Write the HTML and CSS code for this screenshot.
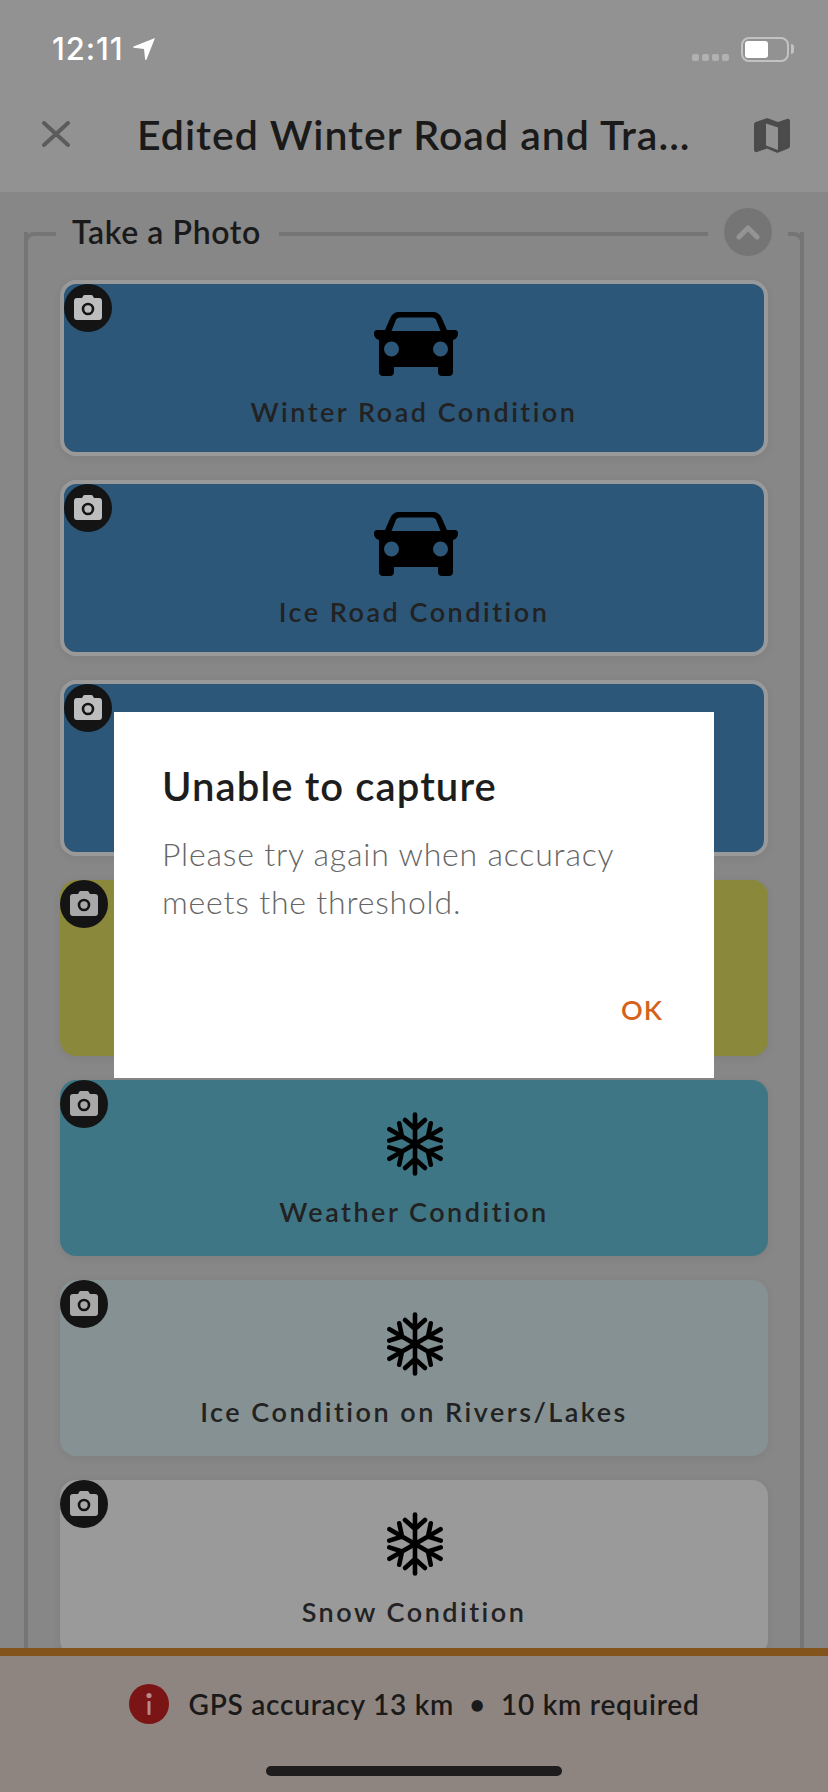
FILE: index.html
```html
<!DOCTYPE html>
<html lang="en">
<head>
<meta charset="utf-8">
<title>Edited Winter Road and Trail</title>
<link rel="stylesheet" href="styles.css">
</head>
<body>
<svg class="defs" width="0" height="0" aria-hidden="true">
  <symbol id="camera" viewBox="0 0 28 25">
    <path fill="currentColor" fill-rule="evenodd" d="M8 3 9 1.200C9.400.4 10 0 11 0h6c1 0 1.600.4 2 1.200L20 3h5c2 0 3 1 3 3v16c0 2-1 3-3 3H3c-2 0-3-1-3-3V6c0-2 1-3 3-3z"/>
    <circle cx="14" cy="14" r="5" fill="none" stroke="#141414" stroke-width="2.600"/>
  </symbol>
  <symbol id="car" viewBox="0 0 84 64">
    <path fill="currentColor" fill-rule="evenodd" d="M25 0h34c4 0 7 2 8.500 5.500L73 18h8c2 0 3 1.500 3 3.500 0 3-1.500 5.500-5 6.500v32c0 2.500-1.500 4-4 4h-7c-2.500 0-4-1.500-4-4v-5H20v5c0 2.500-1.500 4-4 4H9c-2.500 0-4-1.500-4-4V28c-3.500-1-5-3.500-5-6.500C0 19.500 1 18 3 18h8l5.500-12.500C18 2 21 0 25 0zm1 5.500c-2 0-3.500 1-4.200 2.800L17.500 19h49l-4.300-10.700C61.500 6.500 60 5.500 58 5.500zM17.500 29.500a7.500 7.500 0 1 0 0 15 7.500 7.500 0 0 0 0-15zm49 0a7.500 7.500 0 1 0 0 15 7.500 7.500 0 0 0 0-15z"/>
  </symbol>
  <symbol id="flake" viewBox="0 0 56 64">
    <g fill="none" stroke="currentColor" stroke-width="4.600" stroke-linecap="round" stroke-linejoin="round">
      <g id="arm"><path d="M28 32V2.500M18 8 28 17l10-9"/></g>
      <use href="#arm" transform="rotate(60 28 32)"/>
      <use href="#arm" transform="rotate(120 28 32)"/>
      <use href="#arm" transform="rotate(180 28 32)"/>
      <use href="#arm" transform="rotate(240 28 32)"/>
      <use href="#arm" transform="rotate(300 28 32)"/>
    </g>
  </symbol>
</svg>

<div class="app">
  <header class="topbar">
    <div class="status">
      <div class="status-left">
        <span class="time">12:11</span>
        <svg class="loc" viewBox="0 0 22 22"><path fill="#fff" d="M22 0 13.500 21.500c-.4.800-1.300.6-1.400-.2L11 11 .8 9.800C0 9.600-.2 8.800.6 8.400z"/></svg>
      </div>
      <div class="status-right">
        <div class="signal"><i></i><i></i><i></i><i></i></div>
        <div class="battery"><div class="battery-fill"></div></div>
        <div class="battery-nub"></div>
      </div>
    </div>
    <nav class="nav">
      <svg class="close" viewBox="0 0 28 26"><path fill="none" stroke="#5c5c5c" stroke-width="4" stroke-linecap="round" d="M2 2l24 22M26 2 2 24"/></svg>
      <h1 class="title">Edited Winter Road and Tra...</h1>
      <svg class="map" viewBox="0 0 36 36"><path fill="#4b4b4b" fill-rule="evenodd" d="M12 1.500c.8-.4 1.600-.4 2.400 0L24 5l9.500-3.200C35 1.300 36 2.300 36 4v25c0 1.200-.6 2-1.700 2.400l-9.800 4c-.7.300-1.500.3-2.200 0L13 31.500 3 35c-1.500.5-3-.5-3-2V7.500C0 6.300.6 5.500 1.700 5zM12 6.500v22l12 4.500V10.500z"/></svg>
    </nav>
  </header>

  <main class="content">
    <section class="group">
      <div class="group-head">
        <span class="corner corner-l"></span>
        <h2 class="group-title">Take a Photo</h2>
        <span class="rule"></span>
        <span class="toggle"><svg viewBox="0 0 24 16"><path fill="none" stroke="#949494" stroke-width="5" stroke-linecap="round" stroke-linejoin="round" d="M3 13l9-9 9 9"/></svg></span>
        <span class="corner corner-r"></span>
      </div>
      <div class="cards">
        <article class="card card-road selected">
          <span class="badge"><svg><use href="#camera"/></svg></span>
          <svg class="icon icon-car"><use href="#car"/></svg>
          <p class="label">Winter Road Condition</p>
        </article>
        <article class="card card-road selected">
          <span class="badge"><svg><use href="#camera"/></svg></span>
          <svg class="icon icon-car"><use href="#car"/></svg>
          <p class="label">Ice Road Condition</p>
        </article>
        <article class="card card-road selected">
          <span class="badge"><svg><use href="#camera"/></svg></span>
        </article>
        <article class="card card-olive">
          <span class="badge"><svg><use href="#camera"/></svg></span>
        </article>
        <article class="card card-teal">
          <span class="badge"><svg><use href="#camera"/></svg></span>
          <svg class="icon icon-flake"><use href="#flake"/></svg>
          <p class="label">Weather Condition</p>
        </article>
        <article class="card card-ice">
          <span class="badge"><svg><use href="#camera"/></svg></span>
          <svg class="icon icon-flake"><use href="#flake"/></svg>
          <p class="label">Ice Condition on Rivers/Lakes</p>
        </article>
        <article class="card card-snow">
          <span class="badge"><svg><use href="#camera"/></svg></span>
          <svg class="icon icon-flake"><use href="#flake"/></svg>
          <p class="label">Snow Condition</p>
        </article>
      </div>
    </section>
  </main>

  <footer class="gps">
    <div class="gps-row">
      <svg class="gps-icon" viewBox="0 0 40 40"><circle cx="20" cy="20" r="20" fill="#7b1414"/><circle cx="20" cy="11.500" r="2.600" fill="#b98a8a"/><rect x="18.500" y="17" width="3" height="14" rx="1" fill="#b98a8a"/></svg>
      <span class="gps-text">GPS accuracy 13 km<span class="dot">•</span>10 km required</span>
    </div>
    <div class="home"></div>
  </footer>

  <div class="scrim">
    <div class="dialog" role="alertdialog">
      <h3 class="dialog-title">Unable to capture</h3>
      <p class="dialog-body">Please try again when accuracy meets the threshold.</p>
      <div class="dialog-actions"><span class="ok">OK</span></div>
    </div>
  </div>
</div>
</body>
</html>
```

FILE: styles.css
```css
* { box-sizing: border-box; margin: 0; padding: 0; }
html, body { width: 828px; height: 1792px; overflow: hidden; }
body { font-family: "Lato", "Noto Sans", sans-serif; background: #878787; }
.defs { position: absolute; }

.app { position: relative; width: 828px; height: 1792px; display: flex; flex-direction: column; overflow: hidden; }

/* top bar */
.topbar { height: 192px; flex: none; background: #929292; }
.status { height: 86px; padding: 34px 34px 0 52px; display: flex; justify-content: space-between; align-items: flex-start; }
.status-left { display: flex; align-items: center; gap: 9px; height: 30px; }
.time { font-family: "Inter", sans-serif; font-size: 31px; font-weight: 500; line-height: 30px; color: #fff; letter-spacing: .9px; }
.loc { width: 22px; height: 22px; }
.status-right { display: flex; align-items: flex-start; }
.signal { display: flex; gap: 3px; margin: 20px 12px 0 0; }
.signal i { width: 7px; height: 7px; border-radius: 2px; background: #b1b1b1; display: block; }
.battery { width: 48px; height: 25px; margin-top: 3px; border: 2px solid #c2c2c2; border-radius: 8px; padding: 2px; }
.battery-fill { width: 23px; height: 17px; background: #fff; border-radius: 3px; }
.battery-nub { width: 3px; height: 10px; margin: 10px 0 0 2px; background: #c2c2c2; border-radius: 0 3px 3px 0; }

.nav { height: 106px; padding: 0 38px 0 42px; display: flex; align-items: center; }
.close { width: 28px; height: 26px; flex: none; margin-top: -11px; }
.title { width: 617px; margin: -8px 0 0 67px; font-size: 41px; font-weight: 600; line-height: 48px; color: #1a1a1a; white-space: nowrap; letter-spacing: 1px; flex: none; }
.map { width: 36px; height: 36px; flex: none; margin: -9px 0 0 0; }

/* group */
.content { flex: 1; min-height: 0; overflow: hidden; padding: 16px 24px 0; }
.group { height: 100%; }
.group-head { height: 48px; display: flex; align-items: flex-start; }
.corner { width: 32px; height: 30px; margin-top: 24px; border-top: 4px solid #757575; flex: none; }
.corner-l { border-left: 4px solid #757575; border-top-left-radius: 10px; }
.corner-r { width: 16px; margin-left: 16px; border-right: 4px solid #757575; border-top-right-radius: 10px; }
.group-title { margin: 2px 18px 0 16px; font-size: 32px; font-weight: 600; line-height: 44px; color: #1a1a1a; white-space: nowrap; letter-spacing: .6px; }
.rule { flex: 1; height: 4px; margin-top: 24px; background: #757575; }
.toggle { width: 48px; height: 48px; margin-left: 16px; border-radius: 50%; background: #757575; display: flex; align-items: center; justify-content: center; flex: none; }
.toggle svg { width: 24px; height: 16px; }

.cards { padding: 48px 32px 0; margin-top: -24px; border-left: 4px solid #757575; border-right: 4px solid #757575; display: flex; flex-direction: column; gap: 24px; }

.card { position: relative; height: 176px; flex: none; border-radius: 16px; display: flex; flex-direction: column; align-items: center; padding-top: 32px; color: #000; box-shadow: 0 2px 8px rgba(0,0,0,.06); }
.card.selected { border: 4px solid #999; padding-top: 28px; }
.card-road { background: #2c5779; }
.card-olive { background: #8a883b; }
.card-teal { background: #3f7685; }
.card-ice { background: #869193; }
.card-snow { background: #9a9a9a; }

.badge { position: absolute; left: 0; top: 0; width: 48px; height: 48px; border-radius: 50%; background: #141414; color: #a8a8a8; display: flex; align-items: center; justify-content: center; }
.selected .badge { color: #bdbdbd; }
.badge svg { width: 28px; height: 25px; margin-top: -1px; }

.icon { display: block; flex: none; height: 64px; }
.icon-car { width: 84px; margin-left: 4px; }
.icon-flake { width: 56px; margin-left: 1px; }
.label { margin-top: 18px; font-size: 27px; font-weight: 600; line-height: 36px; letter-spacing: 2.500px; color: #222; white-space: nowrap; }

/* gps footer */
.gps { height: 144px; flex: none; border-top: 8px solid #83541c; background: #8f8580; display: flex; flex-direction: column; align-items: center; position: relative; }
.gps-row { display: flex; align-items: center; gap: 20px; margin-top: 28px; height: 40px; }
.gps-icon { width: 40px; height: 40px; flex: none; }
.gps-text { font-size: 28px; font-weight: 600; color: #1a1a1a; white-space: nowrap; letter-spacing: .75px; }
.dot { margin: 0 15px; }
.home { width: 296px; height: 10px; border-radius: 5px; background: #1e1c1d; margin-top: 42px; }

/* dialog */
.scrim { position: absolute; inset: 0; display: flex; align-items: center; justify-content: center; padding-bottom: 2px; }
.dialog { width: 600px; height: 366px; background: #fff; padding: 50px 48px 0; display: flex; flex-direction: column; }
.dialog-title { font-size: 40px; font-weight: 600; line-height: 48px; color: #1d1d1d; letter-spacing: 1.100px; }
.dialog-body { margin-top: 20px; font-size: 32px; font-weight: 300; line-height: 48px; color: #666; letter-spacing: .8px; }
.dialog-actions { display: flex; justify-content: flex-end; margin-top: 66px; padding-right: 3px; }
.ok { font-size: 27px; font-weight: 600; line-height: 36px; color: #d4621a; letter-spacing: 1px; }
```
